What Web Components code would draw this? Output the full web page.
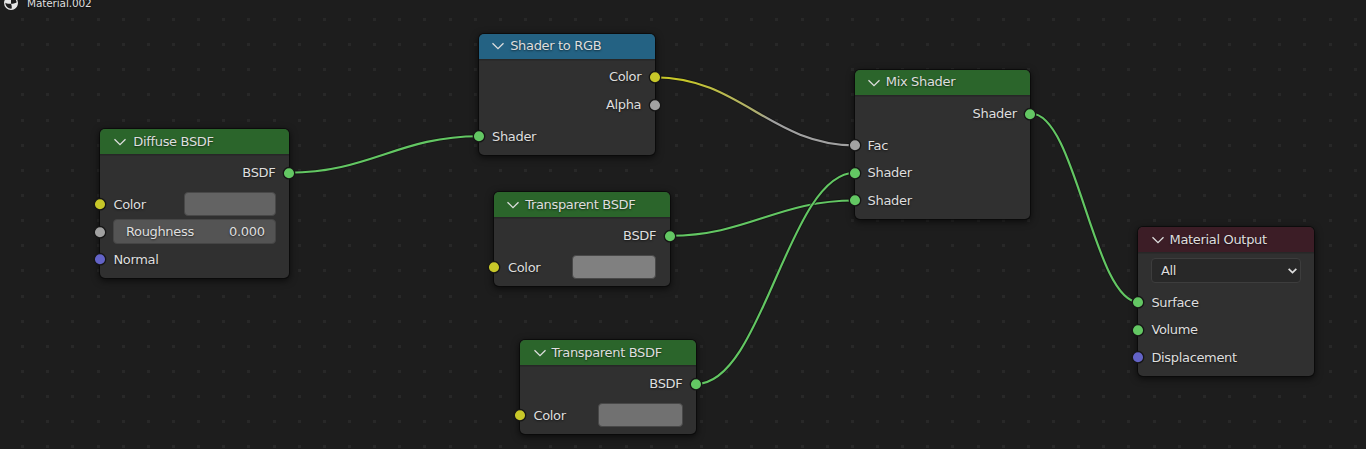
<!DOCTYPE html>
<html lang="en"><head><meta charset="utf-8"><title>Shader Editor</title>
<style>html,body{margin:0;height:100%;overflow:hidden;background:#1d1d1d}</style></head>
<body>
<node-editor>
  <material-path slot="path">Material.002</material-path>
  <shader-node heading="Diffuse BSDF" kind="shader" style="left:100.4px;top:129px;width:188.8px;--title-gap:6.5px">
    <node-socket slot="out" side="right" type="shader">BSDF</node-socket>
    <node-socket type="color">Color<color-swatch slot="field" style="--fill:#636363;width:92px"></color-swatch></node-socket>
    <node-socket type="value"><value-slider slot="wide" amount="0.000">Roughness</value-slider></node-socket>
    <node-socket type="vector">Normal</node-socket>
  </shader-node>
  <shader-node heading="Shader to RGB" kind="converter" style="left:479px;top:33.5px;width:176px">
    <node-socket slot="out" side="right" type="color">Color</node-socket>
    <node-socket slot="out" side="right" type="value">Alpha</node-socket>
    <node-socket type="shader">Shader</node-socket>
  </shader-node>
  <shader-node heading="Transparent BSDF" kind="shader" style="left:494px;top:192px;width:176px">
    <node-socket slot="out" side="right" type="shader">BSDF</node-socket>
    <node-socket type="color" style="padding:0 13.6px 0 14px">Color<color-swatch slot="field" style="--fill:#808080;width:84px"></color-swatch></node-socket>
  </shader-node>
  <shader-node heading="Transparent BSDF" kind="shader" style="left:520.4px;top:340px;width:175.800px">
    <node-socket slot="out" side="right" type="shader">BSDF</node-socket>
    <node-socket type="color" style="padding-right:12.8px">Color<color-swatch slot="field" style="--fill:#717171;width:85px"></color-swatch></node-socket>
  </shader-node>
  <shader-node heading="Mix Shader" kind="shader" style="left:854.6px;top:70px;width:175.900px;--title-lift:1px">
    <node-socket slot="out" side="right" type="shader">Shader</node-socket>
    <node-socket type="value">Fac</node-socket>
    <node-socket type="shader">Shader</node-socket>
    <node-socket type="shader">Shader</node-socket>
  </shader-node>
  <shader-node heading="Material Output" kind="output" style="left:1138.4px;top:227px;width:176px">
    <target-select slot="out">All</target-select>
    <node-socket type="shader">Surface</node-socket>
    <node-socket type="shader">Volume</node-socket>
    <node-socket type="vector">Displacement</node-socket>
  </shader-node>
</node-editor>
<script>
const define = (name, markup, setup) => {
  const template = document.createElement('template');
  template.innerHTML = markup;
  customElements.define(name, class extends HTMLElement {
    constructor() {
      super();
      this.attachShadow({mode: 'open'}).append(template.content.cloneNode(true));
    }
    connectedCallback() { if (setup) setup(this, this.shadowRoot); }
  });
};

define('node-editor', `
<style>
:host{display:block;position:relative;width:100%;height:100vh;overflow:hidden;background:#1d1d1d;color:#dedede;font:13px/16px "DejaVu Sans",sans-serif;letter-spacing:-.33px;text-shadow:0 1px 2px rgba(0,0,0,.55)}
svg{position:absolute;inset:0}
.grid{fill:#282828;shape-rendering:crispEdges}
.wires{fill:none}
.shade{stroke:#111;stroke-width:3.8;opacity:.65}
.wire{stroke-width:2.15}
</style>
<svg width="1366" height="449">
<defs><linearGradient id="fade" gradientUnits="userSpaceOnUse" x1="655" y1="0" x2="855" y2="0"><stop offset=".15" stop-color="#c7c729"/><stop offset=".52" stop-color="#adad72"/><stop offset=".58" stop-color="#a1a1a1"/></linearGradient></defs>
<g class="grid"></g><g class="wires"></g></svg>
<slot name="path"></slot><slot></slot>`, (el, root) => {
  const ns = 'http://www.w3.org/2000/svg';
  const add = (parent, tag, attrs) => {
    const n = document.createElementNS(ns, tag);
    for (const k in attrs) n.setAttribute(k, attrs[k]);
    parent.append(n);
  };
  const step = 25.145;
  for (let y = 18.5; y < 449; y += step)
    for (let x = 21.6; x < 1366; x += step)
      add(root.querySelector('.grid'), 'rect', {x: Math.floor(x), y: Math.floor(y), width: 3, height: 3});
  const links = [
    [289, 172.7, 479, 136.2, '#63c763'],
    [655, 77.2, 855, 145.3, 'url(#fade)'],
    [670, 235.7, 855, 200.5, '#63c763'],
    [696.5, 383.8, 855, 172.8, '#63c763'],
    [1031, 113.5, 1139, 302.2, '#63c763'],
  ];
  for (const [x1, y1, x2, y2, stroke] of links) {
    const reach = (x2 - x1) * .42;
    const d = `M${x1} ${y1}C${x1 + reach} ${y1} ${x2 - reach} ${y2} ${x2} ${y2}`;
    add(root.querySelector('.wires'), 'path', {d, class: 'shade'});
    add(root.querySelector('.wires'), 'path', {d, class: 'wire', stroke});
  }
});

define('material-path', `
<style>
:host{display:flex;position:relative;align-items:center;gap:8px;height:16px;margin-top:-5px;padding-left:3px;font-size:10.5px;letter-spacing:-.12px}
svg{flex:none}
</style>
<svg width="16" height="16" viewBox="0 0 16 16"><circle cx="8" cy="8" r="6.300" fill="#1d1d1d" stroke="#e6e6e6" stroke-width="1.300"/><path d="M8 8.800C5.500 9 3 8.500 1.700 7.600A6.500 6.500 0 0 1 8 1.500ZM8 8.800C10.500 8.800 13 8.200 14.400 7A6.500 6.500 0 0 1 8.500 14.500C9 12.500 8.800 10.500 8 8.800Z" fill="#e6e6e6"/></svg>
<span><slot></slot></span>`);

define('shader-node', `
<style>
:host{display:block;position:absolute;box-sizing:border-box;border-radius:5px;background:#303030;box-shadow:0 0 0 1px rgba(10,10,10,.75),0 2px 7px 1px rgba(0,0,0,.6)}
header{display:flex;align-items:center;box-sizing:border-box;height:25px;padding-left:12.4px;gap:var(--title-gap,4.8px);border-radius:5px 5px 0 0;background:var(--head)}
header span{padding-bottom:var(--title-lift,0)}
:host([kind=shader]){--head:#2b652b}
:host([kind=converter]){--head:#246283}
:host([kind=output]){--head:#3c1d26}
section{display:flex;flex-direction:column;gap:4px;padding:4.75px 0;box-shadow:inset 0 1.500px rgba(0,0,0,.18)}
svg{flex:none}
</style>
<header><svg width="14" height="14" viewBox="0 0 14 14" fill="none" stroke="#dedede" stroke-width="1.300"><path d="M1.500 4.200 7 9.700l5.500-5.500"/></svg><span></span></header>
<section><div><slot name="out"></slot></div><div><slot></slot></div></section>`,
(el, root) => { root.querySelector('span').textContent = el.getAttribute('heading'); });

define('node-socket', `
<style>
:host{display:flex;position:relative;box-sizing:border-box;align-items:center;justify-content:space-between;height:27.5px;padding:0 13px}
:host([side=right]){justify-content:flex-end;padding-right:13.8px}
svg{position:absolute;left:-7px;top:6.750px;width:14px;height:14px;fill:var(--dot);stroke:#161616;stroke-width:1.300}
:host([side=right]) svg{left:auto;right:-7px}
:host([type=shader]){--dot:#63c763}
:host([type=color]){--dot:#c7c729}
:host([type=value]){--dot:#a1a1a1}
:host([type=vector]){--dot:#6363c7}
span{padding-top:1.5px}
:host([side=right]) span{padding-top:.7px}
::slotted([slot=wide]){flex:1}
</style>
<svg viewBox="0 0 14 14"><circle cx="7" cy="7.200" r="5.700"/></svg><span><slot></slot></span><slot name="field"></slot><slot name="wide"></slot>`);

define('color-swatch', `
<style>:host{display:block;box-sizing:border-box;height:24px;border-radius:4px;background:var(--fill);border:1px solid #484848}</style>`);

define('value-slider', `
<style>:host{display:flex;box-sizing:border-box;justify-content:space-between;align-items:center;height:25px;padding:0 10.500px 0 11.500px;border:1px solid #454545;border-radius:4px;background:#545454}b{font-weight:400}</style>
<span><slot></slot></span><b></b>`, (el, root) => { root.querySelector('b').textContent = el.getAttribute('amount'); });

define('target-select', `
<style>:host{display:flex;box-sizing:border-box;justify-content:space-between;align-items:center;height:25px;margin:1.250px 13px;padding:0 2.500px 0 8.500px;border:1px solid #3d3d3d;border-radius:4px;background:#282828}</style>
<span><slot></slot></span><svg width="11" height="11" viewBox="0 0 10 10" fill="none" stroke="#dedede" stroke-width="1.500"><path d="M1.500 3.500 5 7l3.500-3.500"/></svg>`);
</script>
</body></html>
